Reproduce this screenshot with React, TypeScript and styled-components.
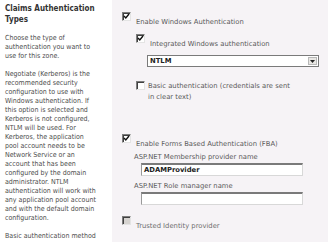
import React from 'react';
import styled, { createGlobalStyle } from 'styled-components';

const Global = createGlobalStyle`
  html, body { margin: 0; padding: 0; background: #fff; }
  body { width: 328px; height: 242px; overflow: hidden; }
`

const Page = styled.div`
  display: flex;
  width: 328px;
  height: 242px;
  overflow: hidden;
`
const Sidebar = styled.div`
  width: 112px;
  flex: none;
  padding: 3px 0 0 5px;
  box-sizing: border-box;
  font-family: "DejaVu Sans Condensed", "DejaVu Sans", sans-serif;
  font-stretch: condensed;
  color: #4c4c4c;
  white-space: nowrap;
`
const Title = styled.div`
  font-size: 8px;
  font-weight: bold;
  line-height: 11px;
  color: #333;
  margin-bottom: 9px;
`
const Para = styled.p`
  margin: 0 0 9px;
  font-size: 7px;
  line-height: 9px;
`
const Panel = styled.div`
  flex: 1;
  background: #f6f3f6;
  padding: 12px 0 0 10px;
  font-family: "DejaVu Sans", Verdana, sans-serif;
  font-size: 6.8px;
  color: #5a5a5a;
`
const Section = styled.div<{ $gap?: number }>`
  margin-bottom: ${p => p.$gap ?? 0}px;
`
const Indent = styled.div<{ $left: number; $top?: number }>`
  padding-left: ${p => p.$left}px;
  margin-top: ${p => p.$top ?? 0}px;
`
const CheckRow = styled.div<{ $drop?: number }>`
  display: flex;
  align-items: flex-start;
  gap: ${p => (p.$drop ? 5 : 3)}px;
`
const Box = styled.span<{ $disabled?: boolean }>`
  flex: none;
  width: 9px;
  height: 9px;
  box-sizing: border-box;
  border: 1px solid;
  border-color: #7d7d7d #e4e4e4 #e4e4e4 #7d7d7d;
  box-shadow: inset 1px 1px 0 #404040;
  background: ${p => (p.$disabled ? '#d6d3d0' : '#fff')};
  display: flex;
  align-items: center;
  justify-content: center;
`
const CheckLabel = styled.span<{ $drop?: number; $disabled?: boolean }>`
  margin-top: ${p => p.$drop ?? 0}px;
  line-height: 11px;
  color: ${p => (p.$disabled ? '#6e6e6e' : 'inherit')};
`
const FieldLabel = styled.div<{ $top?: number }>`
  line-height: 11px;
  padding-left: 12px;
  margin-top: ${p => p.$top ?? 0}px;
`
const TextBox = styled.div`
  margin-left: 19px;
  width: 162px;
  height: 13px;
  box-sizing: border-box;
  background: #fff;
  border: 1px solid #d8d8d8;
  border-top: 2px solid #7a7a7a;
  border-left: 1px solid #9a9a9a;
  padding-left: 2px;
  font-size: 6.8px;
  font-weight: bold;
  color: #222;
  line-height: 10px;
`
const Select = styled.div<{ $top: number }>`
  margin: ${p => p.$top}px 0 0 25px;
  width: 172px;
  height: 12px;
  box-sizing: border-box;
  background: #fff;
  border: 1px solid #7a7a7a;
  display: flex;
  align-items: center;
  justify-content: space-between;
  padding-left: 2px;
  font-size: 6.8px;
  font-weight: bold;
  color: #222;
`
const Arrow = styled.span`
  width: 9px;
  height: 8px;
  margin-right: 1px;
  background: #e8e6e3;
  border: 1px solid #b8b8b8;
  box-sizing: border-box;
  display: flex;
  align-items: center;
  justify-content: center;
`

const Tick = () => (
  <svg width="7" height="7" viewBox="0 0 7 7">
    <path d="M1 3 L2.8 5 L6 1" fill="none" stroke="#111" strokeWidth="1.4" />
  </svg>
)

interface CheckProps {
  checked?: boolean;
  disabled?: boolean;
  drop?: number;
  children: React.ReactNode;
}

const Check = ({ checked, disabled, drop, children }: CheckProps) => (
  <CheckRow $drop={drop}>
    <Box $disabled={disabled}>{checked && <Tick />}</Box>
    <CheckLabel $drop={drop} $disabled={disabled}>{children}</CheckLabel>
  </CheckRow>
)

const intro = ['Choose the type of', 'authentication you want to', 'use for this zone.']
const negotiate = [
  'Negotiate (Kerberos) is the',
  'recommended security',
  'configuration to use with',
  'Windows authentication. If',
  'this option is selected and',
  'Kerberos is not configured,',
  'NTLM will be used. For',
  'Kerberos, the application',
  'pool account needs to be',
  'Network Service or an',
  'account that has been',
  'configured by the domain',
  'administrator. NTLM',
  'authentication will work with',
  'any application pool account',
  'and with the default domain',
  'configuration.',
]

const Lines = ({ lines }: { lines: string[] }) => (
  <Para>
    {lines.map((l, i) => (
      <React.Fragment key={i}>{i > 0 && <br />}{l}</React.Fragment>
    ))}
  </Para>
)

export default function App() {
  return (
    <>
      <Global />
      <Page>
        <Sidebar>
          <Title>Claims Authentication<br />Types</Title>
          <Lines lines={intro} />
          <Lines lines={negotiate} />
          <Lines lines={['Basic authentication method']} />
        </Sidebar>
        <Panel>
          <Section $gap={31}>
            <Check checked drop={5}>Enable Windows Authentication</Check>
            <Indent $left={14} $top={6}>
              <Check checked drop={5}>Integrated Windows authentication</Check>
            </Indent>
            <Select $top={5}>
              NTLM
              <Arrow>
                <svg width="5" height="3" viewBox="0 0 5 3"><path d="M0 0 H5 L2.5 3 Z" fill="#222" /></svg>
              </Arrow>
            </Select>
            <Indent $left={14} $top={14}>
              <Check>Basic authentication (credentials are sent<br />in clear text)</Check>
            </Indent>
          </Section>
          <Section $gap={11}>
            <Check checked drop={5}>Enable Forms Based Authentication (FBA)</Check>
            <FieldLabel $top={2}>ASP.NET Membership provider name</FieldLabel>
            <TextBox>ADAMProvider</TextBox>
            <FieldLabel $top={5}>ASP.NET Role manager name</FieldLabel>
            <TextBox />
          </Section>
          <Check disabled drop={5}>Trusted Identity provider</Check>
        </Panel>
      </Page>
    </>
  );
}
